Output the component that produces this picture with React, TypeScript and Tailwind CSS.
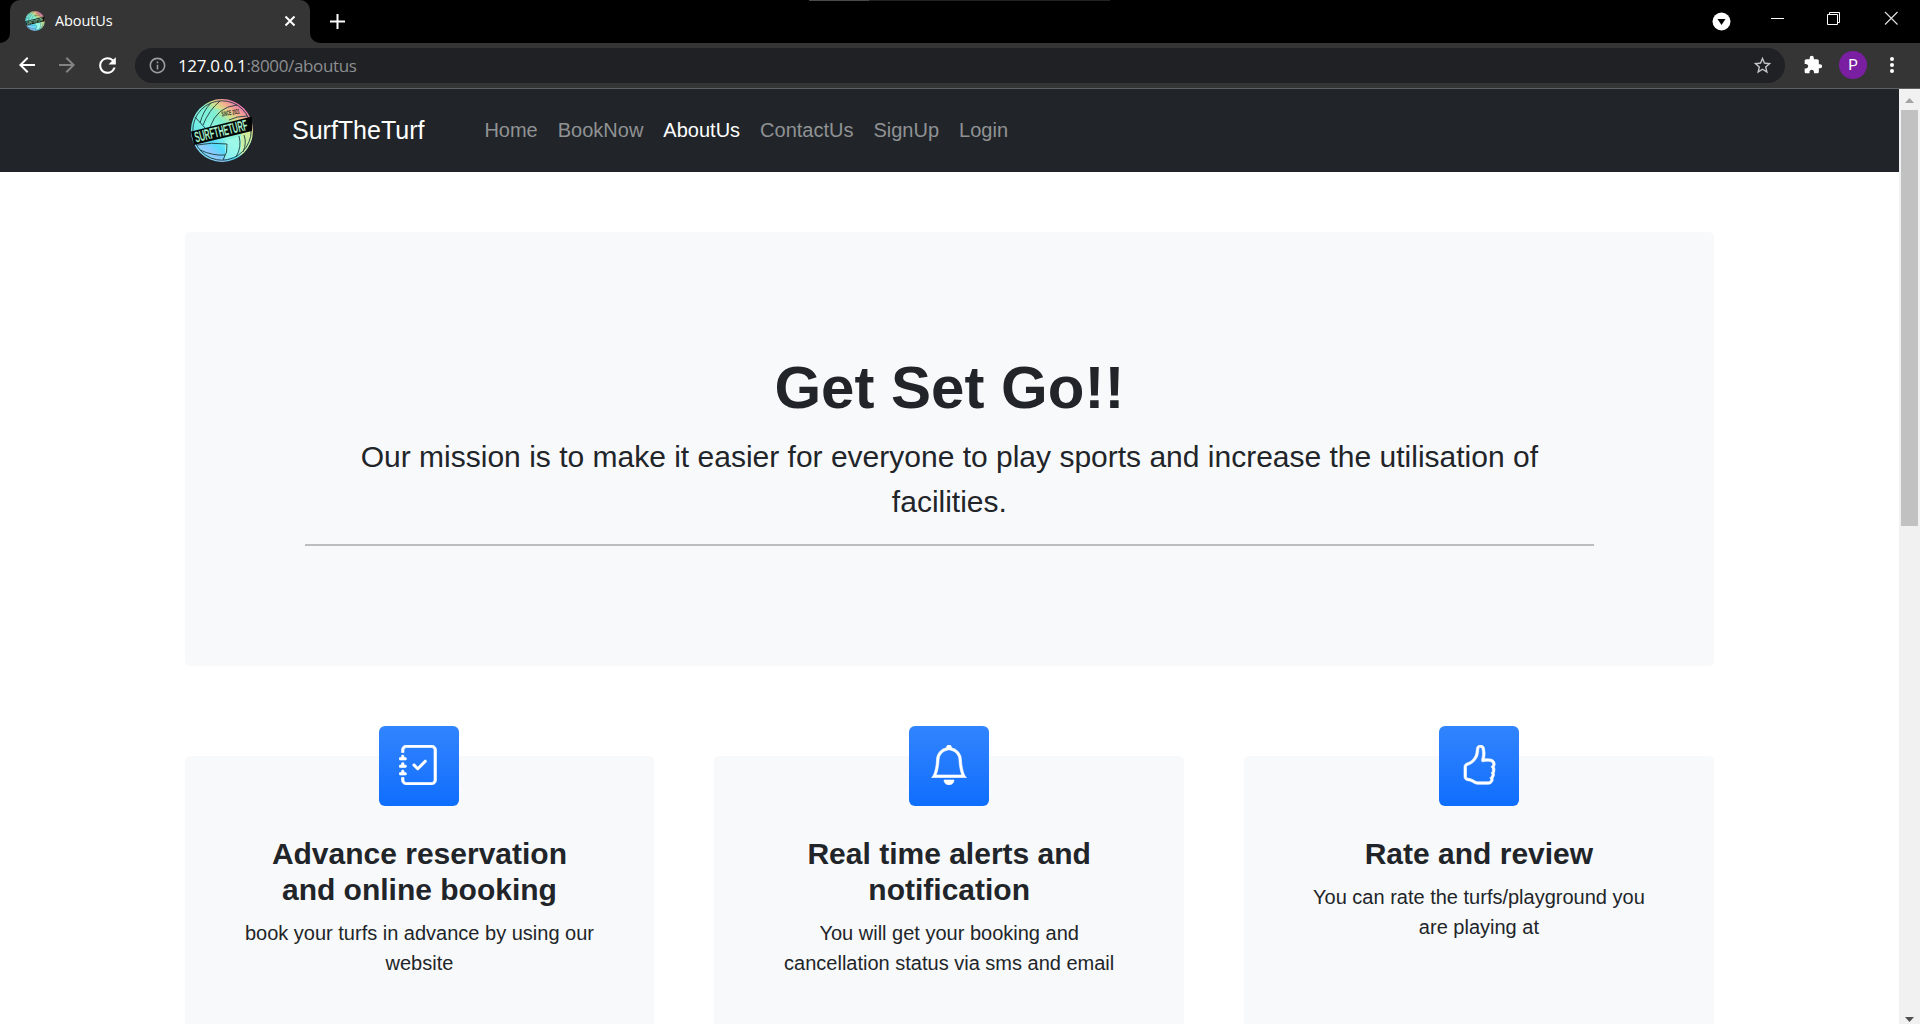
import React from 'react';
import { BsJournalCheck, BsBell, BsHandThumbsUp } from 'react-icons/bs';
import { MdExtension, MdStarBorder, MdInfoOutline, MdRefresh, MdArrowBack, MdArrowForward } from 'react-icons/md';

const Ball = ({ className, id }: { className: string; id: string }) => (
  <svg className={className} viewBox="0 0 62 63" overflow="visible">
    <defs>
      <linearGradient id={id} x1="0.2" y1="0.95" x2="0.85" y2="0.1">
        <stop offset="0" stopColor="#6fe6f4" />
        <stop offset="0.14" stopColor="#8fc8ff" />
        <stop offset="0.28" stopColor="#52dcfa" />
        <stop offset="0.45" stopColor="#8cf5e4" />
        <stop offset="0.62" stopColor="#7eedcb" />
        <stop offset="0.74" stopColor="#d3e38c" />
        <stop offset="0.84" stopColor="#f3b08e" />
        <stop offset="1" stopColor="#ec62b4" />
      </linearGradient>
      <clipPath id={id + 'c'}>
        <ellipse cx="31" cy="31.500" rx="31" ry="31.500" />
      </clipPath>
    </defs>
    <g clipPath={`url(#${id}c)`}>
      <rect width="62" height="63" fill={`url(#${id})`} />
      <path d="M0 10H30L8 32H0Z" fill="#7cf0dc" opacity="0.6" />
      <path d="M34 42L52 36L50 56L34 60Z" fill="#a5fbe9" opacity="0.7" />
      <path d="M50 34L58 30L62 40L54 54L50 56Z" fill="#d8ef9a" opacity="0.8" />
      <g fill="none" stroke="#1d3c40" strokeWidth="0.900">
        <ellipse cx="31" cy="31.500" rx="29.200" ry="29.700" />
        <path d="M20 4Q12 12 9 24M29 2Q18 11 12 26M4 18L15 30M19 28Q26 8 46 6M38 21Q46 17 56 17" />
        <path d="M6 46Q20 43 36 45Q37 53 32 61M9 51Q22 57 34 56M48 37Q51 48 45 58M53 36Q56 44 52 53" />
      </g>
    </g>
    <text x="31" y="17.500" fontSize="7" fontWeight="700" fontFamily="Liberation Sans" textLength="18" lengthAdjust="spacingAndGlyphs" fill="#2a2a22" transform="rotate(-10 31 17.500)">SINCE 2021</text>
    <path d="M0 32.500L61 17.500V32L3 46Z" fill="#050808" />
    <text x="5" y="43.500" fontSize="15" fontWeight="700" fontFamily="Liberation Sans" textLength="54" lengthAdjust="spacingAndGlyphs" fill="#a5edc9" transform="rotate(-13.700 5 43.500)">SURFTHETURF</text>
  </svg>
);

const links = ['Home', 'BookNow', 'AboutUs', 'ContactUs', 'SignUp', 'Login'];

const cards = [
  { icon: BsJournalCheck, title: 'Advance reservation and online booking', text: 'book your turfs in advance by using our website' },
  { icon: BsBell, title: 'Real time alerts and notification', text: 'You will get your booking and cancellation status via sms and email' },
  { icon: BsHandThumbsUp, title: 'Rate and review', text: 'You can rate the turfs/playground you are playing at' },
];

function TabStrip() {
  return (
    <div className="flex h-[43px] shrink-0 bg-black">
      <div className="flex h-full w-[10px] items-end bg-[#353535]">
        <div className="h-full w-full rounded-br-[10px] bg-black" />
      </div>
      <div className="h-full bg-black">
        <div className="flex h-full w-[300px] items-center rounded-t-[10px] bg-[#353535] pl-[15px] pr-[14px]">
          <Ball id="tabBall" className="mt-[-1px] h-5 w-5" />
          <span className="ml-[10px] mt-[-2px] flex-1 font-['Open_Sans',sans-serif] text-[14.5px] tracking-[-0.1px] text-white">AboutUs</span>
          <svg width="12" height="12" viewBox="0 0 12 12" className="mt-[-1px]" stroke="#fff" strokeWidth="2"><path d="M1.500 1.500L10.500 10.500M10.500 1.500L1.500 10.500" /></svg>
        </div>
      </div>
      <div className="h-full w-[10px] bg-[#353535]"><div className="h-full w-full rounded-bl-[10px] bg-black" /></div>
      <svg width="16" height="16" viewBox="0 0 16 16" className="ml-[9px] mt-[13px]" stroke="#fff" strokeWidth="2"><path d="M8.500 1V16M1 8.500H16" /></svg>
      <div className="flex-1 pl-[464px]">
        <div className="h-px w-[301px] bg-[#222]"><div className="h-px w-[60px] bg-[#4a4a4a]" /></div>
      </div>
      <svg width="220" height="43" viewBox="1700 0 220 43" fill="none" className="shrink-0">
        <circle cx="1721.500" cy="21.500" r="9" fill="#fff" />
        <path d="M1717.500 19H1725.500L1721.500 25Z" fill="#000" />
        <path d="M1771 18.500H1784" stroke="#fff" />
        <path d="M1827.500 14.500H1837.500V24.500H1827.500ZM1829.500 14V12.500H1839.500V22.500H1838" stroke="#fff" />
        <path d="M1885 12L1897.500 24.500M1897.500 12L1885 24.500" stroke="#ddd" strokeWidth="1.200" />
      </svg>
    </div>
  );
}

function Toolbar() {
  return (
    <div className="flex h-[46px] shrink-0 items-center border-b border-[#5f6062] bg-[#353535] pb-px">
      <MdArrowBack className="ml-[15px] size-[24px] text-white" />
      <MdArrowForward className="ml-[16px] size-[24px] text-[#848484]" />
      <MdRefresh className="ml-[16px] size-[25px] text-white" />
      <div className="ml-[15px] flex h-[35px] flex-1 items-center rounded-full bg-[#202124] pl-[13px] pr-[12px]">
        <MdInfoOutline className="size-[19px] text-[#9a9da1]" />
        <span className="ml-[11px] flex-1 font-['Open_Sans',sans-serif] text-[17px] leading-none tracking-[-0.36px] text-[#8d8f92]"><span className="text-white">127.0.0.1</span>:8000/aboutus</span>
        <MdStarBorder className="size-[21px] text-[#c3c5c8]" />
      </div>
      <MdExtension className="ml-[18px] size-[20px] text-white" />
      <div className="ml-[16px] flex size-[28px] items-center justify-center rounded-full bg-[#7b1fa2] font-[Roboto] text-[15px] text-white">P</div>
      <div className="ml-[23px] mr-[26px] flex flex-col gap-[2px]">
        {[0, 1, 2].map((i) => <i key={i} className="size-1 rounded-full bg-white" />)}
      </div>
    </div>
  );
}

export default function App() {
  return (
    <div className="flex h-screen flex-col overflow-hidden bg-white font-['Liberation_Sans',Arial,sans-serif] text-[#212529]">
      <TabStrip />
      <Toolbar />
      <div className="flex min-h-0 flex-1">
        <main className="min-w-0 flex-1 overflow-hidden">
          <nav className="flex h-[83px] items-center bg-[#212529] pl-[191px]">
            <Ball id="navBall" className="h-[63px] w-[62px]" />
            <span className="ml-[39px] w-[182.4px] text-[25px] text-white">SurfTheTurf</span>
            {links.map((l) => (
              <a key={l} className={`px-[10px] pb-[2px] text-[20px] ${l === 'AboutUs' ? 'text-white' : 'text-[#909294]'}`}>{l}</a>
            ))}
          </nav>
          <header className="ml-[184.6px] mt-[60px] h-[434px] w-[1529.6px] rounded-[5px] bg-[#f8f9fa] p-[120px] text-center">
            <h1 className="text-[60px] font-bold leading-[72px]">Get Set Go!!</h1>
            <p className="mt-[10px] text-[30px] leading-[45px]">Our mission is to make it easier for everyone to play sports and increase the utilisation of facilities.</p>
            <hr className="mt-5 h-[2px] border-0 bg-[#bcbdbe]" />
          </header>
          <section className="ml-[184.6px] mt-[90px] grid w-[1529.2px] grid-cols-3 gap-[60px]">
            {cards.map(({ icon: Icon, title, text }) => (
              <article key={title} className="h-[300px] rounded-[5px] bg-[#f8f9fa] px-[60px] text-center">
                <div className="mx-auto mb-[30px] mt-[-30px] flex size-[80px] items-center justify-center rounded-[6px] bg-linear-to-b from-[#3184fd] to-[#0d6efd]">
                  <Icon className="mt-[-2px] size-[40px] text-white" stroke="currentColor" strokeWidth="0.25" />
                </div>
                <h2 className="px-4 text-[30px] font-bold leading-[36px]">{title}</h2>
                <p className="mt-[10px] text-[20px] leading-[30px]">{text}</p>
              </article>
            ))}
          </section>
        </main>
        <aside className="flex w-[21px] flex-col items-center bg-[#f1f1f1]">
          <svg width="9" height="5" viewBox="0 0 9 5" className="mt-[9px]" fill="#a3a3a3"><path d="M4.500 0L9 5H0Z" /></svg>
          <div className="mt-[7px] h-[416px] w-[17px] bg-[#c1c1c1]" />
          <svg width="9" height="5" viewBox="0 0 9 5" className="mb-[2px] mt-auto" fill="#505050"><path d="M0 0H9L4.500 5Z" /></svg>
        </aside>
      </div>
    </div>
  );
}
